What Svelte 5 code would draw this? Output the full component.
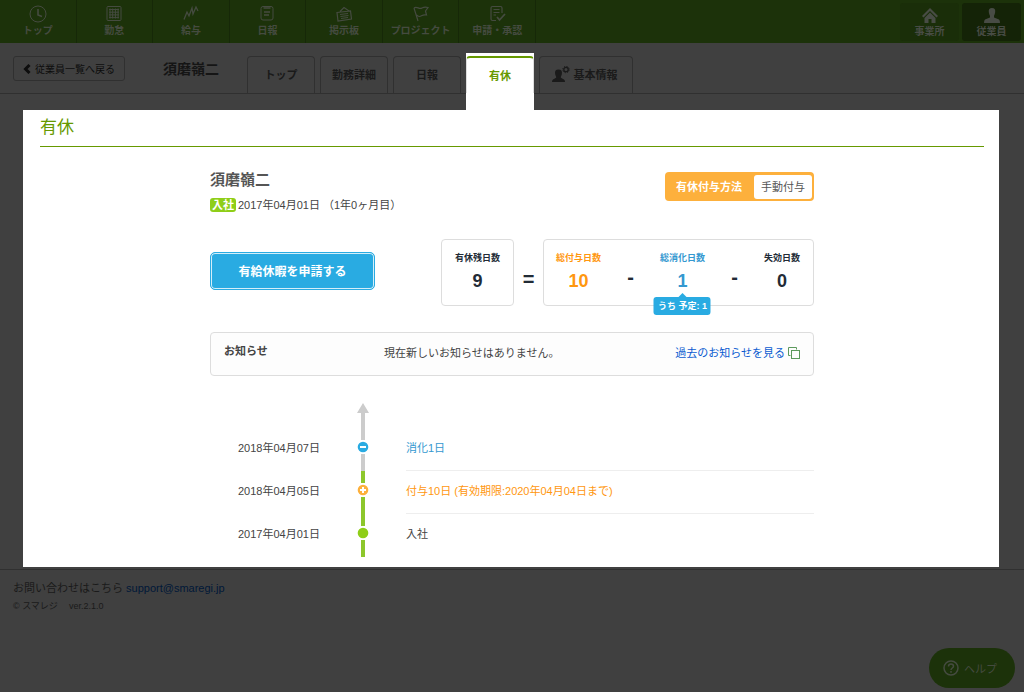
<script lang="ts">
  const navItems = [
    { label: "トップ", icon: "clock" },
    { label: "勤怠", icon: "grid" },
    { label: "給与", icon: "chart" },
    { label: "日報", icon: "report" },
    { label: "掲示板", icon: "board" },
    { label: "プロジェクト", icon: "flag" },
    { label: "申請・承認", icon: "approve" },
  ];

  const tabs = ["トップ", "勤務詳細", "日報", "有休", "基本情報"];
  const activeTab = "有休";

  const totals = [
    { label: "総付与日数", value: 10, kind: "grant" },
    { label: "総消化日数", value: 1, kind: "used", planned: 1 },
    { label: "失効日数", value: 0, kind: "expired" },
  ];

  const history = [
    { date: "2018年04月07日", text: "消化1日", kind: "used" },
    { date: "2018年04月05日", text: "付与10日 (有効期限:2020年04月04日まで)", kind: "grant" },
    { date: "2017年04月01日", text: "入社", kind: "joined" },
  ];
</script>

<header class="global-header">
  <nav class="global-nav">
    {#each navItems as item}
      <a class="nav-item" href="#{item.icon}">
        <svg class="nav-icon" viewBox="0 0 18 18" width="18" height="18">
          {#if item.icon === "clock"}
            <circle cx="9" cy="9" r="8" />
            <path d="M9 4v6l4 1.500" stroke-width="1.6" />
          {:else if item.icon === "grid"}
            <rect x="2" y="1.500" width="14" height="14" rx="1" />
            <path d="M4 4.500h10M4 7.200h10M4 9.900h10M4 12.600h10M5 3.500v10M7.700 3.500v10M10.400 3.500v10M13.100 3.500v10" />
          {:else if item.icon === "chart"}
            <path d="M2 14.500L5 7l2 4 3-8 1 6 3-7 2 4" stroke-width="1.3" />
          {:else if item.icon === "report"}
            <rect x="3" y="1.500" width="12" height="13.500" rx="2" />
            <path d="M5.500 3h7M6 7h6M6 10h5" stroke-width="1.5" />
          {:else if item.icon === "board"}
            <path d="M2 7.500l13.500-1.500 1 8L3 16zM5 6.500l4-4 5 3.500M5 9.500l8-1M5.500 11.500l8-1M6 13.500l7-1" stroke-width="1.2" />
          {:else if item.icon === "flag"}
            <path d="M2 3l4 13M2 3c3-2.500 5 2 8 0 2-1 4-1 6-.5l-2.500 3.500 1 4c-4-1-5 1.500-7 1.500-1.500 0-2-1-3-1.500" stroke-width="1.2" />
          {:else}
            <path d="M14 8V3q0-1.500-1.500-1.500h-8Q3 1.500 3 3v11q0 1.500 1.500 1.500H8M5.500 4.500h6M5.500 7.500h6M5.500 10H8" stroke-width="1.2" />
            <path d="M9 12l2.500 3 5.500-6" stroke-width="1.8" />
          {/if}
        </svg>
        <span>{item.label}</span>
      </a>
    {/each}
  </nav>
  <div class="mode-switch">
    <button class="mode">
      <svg viewBox="0 0 16 15" width="16" height="15">
        <path d="M8 0L0 8l1.500 1.500L8 3l6.500 6.500L16 8z" />
        <path d="M8 4.500L2.500 10v5h4v-4h3v4h4v-5z" />
      </svg>
      <span>事業所</span>
    </button>
    <button class="mode current">
      <svg viewBox="0 0 16 15" width="16" height="15">
        <path d="M8 0c2.500 0 3.500 1.500 3.200 4-.2 2-1 3-1.200 4v1.500l5 2q1 .5 1 3.500H0q0-3 1-3.500l5-2V8c-.2-1-1-2-1.200-4C4.500 1.500 5.500 0 8 0z" />
      </svg>
      <span>従業員</span>
    </button>
  </div>
</header>

<div class="sub-header">
  <button class="back">
    <svg viewBox="0 0 8 10" width="8" height="10"><path d="M6.500 1l-4 4 4 4" /></svg>
    従業員一覧へ戻る
  </button>
  <strong class="employee">須磨嶺二</strong>
  <nav class="tabs">
    {#each tabs as tab}
      <div class="tab-cell" class:active={tab === activeTab}>
        <a class="tab" class:wide={tab === "基本情報"} href="#{tab}">
          {#if tab === "基本情報"}
            <svg viewBox="0 0 18 18" width="18" height="18">
              <path d="M6.500 3.500c2.800 0 3.800 1.500 3.400 4.200-.2 1.500-.8 2.300-1 3.100v1l3.100 1.700q1 .5 1 2.500H0q0-2 1-2.500l3.100-1.700v-1c-.2-.8-.8-1.600-1-3.100-.4-2.700.6-4.200 3.400-4.200z" fill="currentColor" />
              <circle cx="14" cy="3.500" r="2.200" fill="none" stroke="currentColor" stroke-width="1.300" />
              <circle cx="14" cy="3.500" r="3.200" fill="none" stroke="currentColor" stroke-width="1" stroke-dasharray="1.257 1.257" />
            </svg>
          {/if}
          {tab}
        </a>
      </div>
    {/each}
  </nav>
</div>

<main class="panel">
  <h1>有休</h1>
  <div class="content">
    <div class="profile">
      <div>
        <h2>須磨嶺二</h2>
        <p class="hired"><span class="badge">入社</span>2017年04月01日 （1年0ヶ月目）</p>
      </div>
      <div class="method">
        <strong>有休付与方法</strong>
        <span>手動付与</span>
      </div>
    </div>

    <div class="summary">
      <button class="apply">有給休暇を申請する</button>
      <div class="formula">
        <div class="box">
          <div class="count">
            <span class="label">有休残日数</span>
            <span class="value">9</span>
          </div>
        </div>
        <span class="equal">=</span>
        <div class="box totals">
          {#each totals as total, i}
            {#if i > 0}<span class="minus">-</span>{/if}
            <div class="count {total.kind}">
              <span class="label">{total.label}</span>
              <span class="value">{total.value}</span>
              {#if total.planned}
                <span class="planned">うち 予定: {total.planned}</span>
              {/if}
            </div>
          {/each}
        </div>
      </div>
    </div>

    <section class="notice">
      <h3>お知らせ</h3>
      <p>現在新しいお知らせはありません。</p>
      <a href="#notices">
        過去のお知らせを見る
        <svg viewBox="0 0 12 12" width="12" height="12">
          <path d="M2.500 8.500h-2v-8h8v2" />
          <rect x="3.500" y="3.500" width="8" height="8" />
        </svg>
      </a>
    </section>

    <div class="timeline">
      <svg class="arrow" viewBox="0 0 12 25" width="12" height="25">
        <path d="M6 0l6 10H8v15H4V10H0z" />
      </svg>
      <ol>
        {#each history as entry}
          <li class={entry.kind}>
            <time>{entry.date}</time>
            <div class="axis">
              <svg viewBox="0 0 12 14" width="12" height="14">
                <circle cx="6" cy="7" r="5.300" />
                {#if entry.kind !== "joined"}<path d="M3 7h6" />{/if}
                {#if entry.kind === "grant"}<path d="M6 4v6" />{/if}
              </svg>
            </div>
            <p>{entry.text}</p>
          </li>
        {/each}
      </ol>
    </div>
  </div>
</main>

<footer>
  <p>お問い合わせはこちら <a href="mailto:support@smaregi.jp">support@smaregi.jp</a></p>
  <p class="version"><span>© スマレジ</span><span>ver.2.1.0</span></p>
</footer>

<button class="help">
  <svg viewBox="0 0 16 16" width="16" height="16">
    <circle cx="8" cy="8" r="7" />
    <path d="M5.500 6.500c0-3.500 5-3.200 5-.3 0 1.800-2.500 1.800-2.500 3.800M8 11v1.800" />
  </svg>
  ヘルプ
</button>

<style>
  :global(body) {
    background: #404040;
    color: #444;
    font: 11px/20px "Liberation Sans", "Noto Sans CJK JP", sans-serif;
  }

  h1, h2, h3, p, ol {
    margin: 0;
    padding: 0;
    font-size: 11px;
  }

  a {
    text-decoration: none;
  }

  button {
    font-family: inherit;
    cursor: pointer;
  }

  svg {
    flex: none;
  }

  .global-header {
    display: flex;
    justify-content: space-between;
    height: 43px;
    background: #1c320a;
  }

  .global-nav {
    display: grid;
    grid-template-columns: repeat(7, 1fr);
    width: 536px;
  }

  .nav-item {
    display: flex;
    flex-direction: column;
    align-items: center;
    padding-top: 5px;
    border-right: 1px solid #162808;
    color: #454b40;
    font-size: 10px;
    font-weight: 700;
    line-height: 16px;
  }

  .nav-icon {
    fill: none;
    stroke: currentColor;
    stroke-width: 1;
  }

  .mode-switch {
    display: flex;
    gap: 3px;
    padding: 3px 3px 2px 0;
  }

  .mode {
    display: flex;
    flex-direction: column;
    align-items: center;
    width: 59px;
    padding: 5px 0 0;
    border: 0;
    border-radius: 3px;
    background: #1a2e09;
    color: #484c45;
    font-size: 10px;
    font-weight: 700;
    line-height: 18px;
  }

  .mode.current {
    background: #142307;
  }

  .mode svg {
    fill: currentColor;
  }

  .sub-header {
    display: flex;
    align-items: flex-start;
    height: 50px;
    padding-left: 13px;
    border-bottom: 1px solid #303030;
  }

  .back {
    display: flex;
    align-items: center;
    justify-content: center;
    gap: 4px;
    width: 112px;
    height: 25px;
    margin: 13px 38px 0 0;
    padding: 0;
    border: 1px solid #303030;
    border-radius: 3px;
    background: #404040;
    color: #0d0d0d;
    font-size: 10px;
    white-space: nowrap;
  }

  .back svg {
    fill: none;
    stroke: currentColor;
    stroke-width: 3;
  }

  .employee {
    width: 56px;
    margin: 16px 28px 0 0;
    color: #151515;
    font-size: 14px;
    white-space: nowrap;
  }

  .tabs {
    display: flex;
    gap: 5px;
    height: 50px;
  }

  .tab-cell {
    padding-top: 13px;
  }

  .tab {
    display: flex;
    align-items: center;
    justify-content: center;
    gap: 4px;
    box-sizing: border-box;
    width: 68px;
    height: 37px;
    border: 1px solid #303030;
    border-bottom: 0;
    border-radius: 4px 4px 0 0;
    color: #1a1a1a;
    font-weight: 700;
    white-space: nowrap;
  }

  .tab.wide {
    width: 94px;
    padding-right: 3px;
  }

  /* the highlighted tab is joined to the panel below */
  .tab-cell.active {
    height: 54px;
    margin-top: 10px;
    padding-top: 3px;
    background: #fff;
  }

  .active .tab {
    border-color: #ddd;
    border-top: 2px solid #690;
    color: #690;
  }

  .panel {
    margin: 16px 25px 0 23px;
    padding: 4px 15px 10px 17px;
    background: #fff;
  }

  h1 {
    padding-bottom: 5px;
    border-bottom: 1px solid #690;
    color: #690;
    font-size: 17px;
    font-weight: 400;
    line-height: 27px;
  }

  .content {
    max-width: 604px;
    margin: 0 auto;
    padding-top: 23px;
  }

  .profile {
    display: flex;
    justify-content: space-between;
    align-items: flex-start;
  }

  h2 {
    color: #555;
    font-size: 15px;
  }

  .hired {
    padding-top: 5px;
  }

  .badge {
    display: inline-block;
    margin-right: 2px;
    padding: 0 2px;
    border-radius: 3px;
    background: #8fce18;
    color: #fff;
    font-weight: 700;
    line-height: 14px;
  }

  .method {
    display: flex;
    align-items: center;
    gap: 12px;
    height: 29px;
    margin-top: 2px;
    padding: 0 2px 0 11px;
    border-radius: 4px;
    background: #fdb03c;
    box-sizing: border-box;
  }

  .method strong {
    color: #fff;
  }

  .method span {
    padding: 2px 7px;
    border-radius: 3px;
    background: #fff;
    color: #555;
  }

  .summary {
    display: flex;
    justify-content: space-between;
    align-items: center;
    margin-top: 24px;
  }

  .apply {
    width: 165px;
    height: 38px;
    margin-bottom: 3px;
    padding: 0 0 2px;
    border: 1px solid #29abe2;
    border-radius: 5px;
    background: #29abe2;
    box-shadow: inset 0 0 0 1px #d4eef9;
    color: #fff;
    font-size: 12px;
    font-weight: 700;
  }

  .formula {
    display: flex;
  }

  .box {
    box-sizing: border-box;
    height: 67px;
    padding: 9px 13px;
    border: 1px solid #ddd;
    border-radius: 4px;
    color: #222b36;
  }

  .totals {
    display: flex;
    justify-content: space-between;
    width: 271px;
    padding: 9px 13px 9px 12px;
  }

  .count {
    position: relative;
    display: flex;
    flex-direction: column;
    align-items: center;
    font-weight: 700;
    white-space: nowrap;
  }

  .label {
    font-size: 9px;
    line-height: 18px;
  }

  .value {
    font-size: 18px;
    line-height: 28px;
  }

  .count.grant,
  .grant p {
    color: #ff9710;
  }

  .count.used,
  .used p {
    color: #3498d0;
  }

  .equal {
    width: 29px;
    padding-top: 30px;
    color: #222b36;
    font-size: 20px;
    font-weight: 700;
    text-align: center;
  }

  .minus {
    padding-top: 18px;
    font-size: 20px;
    font-weight: 700;
  }

  .planned {
    position: absolute;
    top: 48px;
    left: 50%;
    padding: 0 4px;
    border-radius: 3px;
    background: #29abe2;
    color: #fff;
    font-size: 9px;
    font-weight: 700;
    line-height: 18px;
    transform: translateX(-50%);
  }

  .planned::before {
    content: "";
    position: absolute;
    top: -4px;
    left: 50%;
    margin-left: -4px;
    border: 4px solid transparent;
    border-top: 0;
    border-bottom-color: #29abe2;
  }

  .notice {
    display: flex;
    margin-top: 26px;
    padding: 8px 13px 12px;
    border: 1px solid #ddd;
    border-radius: 4px;
    background: #fdfdfd;
  }

  .notice h3 {
    width: 160px;
  }

  .notice p,
  .notice a {
    padding-top: 2px;
  }

  .notice p {
    flex: 1;
  }

  .notice a {
    display: flex;
    align-items: center;
    gap: 3px;
    color: #0a5bd0;
  }

  .notice svg {
    fill: none;
    stroke: #5c9a5c;
  }

  .timeline {
    padding-top: 27px;
  }

  .arrow {
    display: block;
    margin-left: 147px;
    fill: #ccc;
  }

  ol {
    list-style: none;
  }

  li {
    display: grid;
    grid-template-columns: 119px 12px 1fr;
    height: 43px;
    padding-left: 28px;
  }

  time {
    padding-top: 10px;
  }

  .axis {
    display: flex;
    flex-direction: column;
    align-items: center;
  }

  .axis::before,
  .axis::after {
    content: "";
    width: 4px;
    height: 12px;
    background: #8dc72c;
  }

  .axis::after {
    flex: 1;
  }

  .used .axis::before,
  .used .axis::after {
    background: #ccc;
  }

  .axis svg {
    fill: #8fce18;
  }

  .used svg {
    fill: #29abe2;
  }

  .grant svg {
    fill: #fdb03c;
  }

  .axis path {
    stroke: #fff;
    stroke-width: 2;
  }

  li p {
    margin-left: 37px;
    padding-top: 10px;
    border-bottom: 1px solid #eee;
  }

  li:last-child p {
    border-bottom: 0;
  }

  footer {
    margin-top: 2px;
    padding: 8px 13px;
    border-top: 1px solid #303030;
    color: #1a1a1a;
  }

  footer a {
    color: #001838;
  }

  .version {
    display: flex;
    gap: 11px;
    font-size: 9px;
    line-height: 16px;
  }

  .help {
    position: fixed;
    right: 9px;
    bottom: 4px;
    display: flex;
    align-items: center;
    justify-content: center;
    gap: 5px;
    width: 86px;
    height: 40px;
    padding: 0 4px 0 0;
    border: 0;
    border-radius: 20px;
    background: #1c320a;
    color: #454b40;
    font-size: 11px;
  }

  .help svg {
    fill: none;
    stroke: currentColor;
    stroke-width: 1.5;
  }
</style>
